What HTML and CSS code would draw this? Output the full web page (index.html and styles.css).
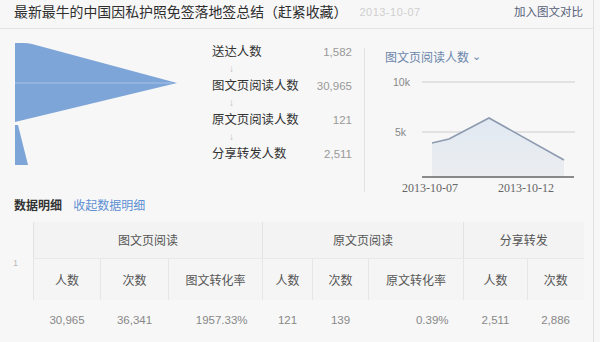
FILE: index.html
```html
<!DOCTYPE html>
<html lang="zh-CN">
<head>
    <meta charset="UTF-8">
    <title>图文分析</title>
    <link rel="stylesheet" href="styles.css">
</head>
<body>
<div class="page">
    <div class="page__head">
        <span class="page__title">最新最牛的中国因私护照免签落地签总结（赶紧收藏）</span>
        <span class="page__date">2013-10-07</span>
        <a class="page__compare">加入图文对比</a>
    </div>

    <div class="overview">
        <svg class="funnel" width="200" height="168" viewBox="0 0 200 168">
            <path d="M15 14 L24 14 Q28 14 32 15 L177 54 L15 93 Z" fill="#7ea5d7"/>
            <line x1="15" y1="54" x2="172" y2="54" stroke="#a8c3e6" stroke-width="1"/>
            <path d="M15 96 L18 96 L28 136 L15 136 Z" fill="#7ea5d7"/>
        </svg>

        <ul class="stats">
            <li class="stats__row"><span>送达人数</span><span class="stats__num">1,582</span></li>
            <li class="stats__arrow">↓</li>
            <li class="stats__row"><span>图文页阅读人数</span><span class="stats__num">30,965</span></li>
            <li class="stats__arrow">↓</li>
            <li class="stats__row"><span>原文页阅读人数</span><span class="stats__num">121</span></li>
            <li class="stats__arrow">↓</li>
            <li class="stats__row"><span>分享转发人数</span><span class="stats__num">2,511</span></li>
        </ul>

        <div class="trend">
            <div class="trend__title">图文页阅读人数 <span class="trend__caret">⌄</span></div>
            <svg class="trend__chart" width="200" height="125" viewBox="0 0 200 125">
                <defs>
                    <linearGradient id="area" x1="0" y1="0" x2="0" y2="1">
                        <stop offset="0" stop-color="#e1e9f3"/>
                        <stop offset="1" stop-color="#ebedef"/>
                    </linearGradient>
                </defs>
                <line x1="37" y1="10" x2="190" y2="10" stroke="#e2e2e2" stroke-width="2"/>
                <line x1="37" y1="60" x2="190" y2="60" stroke="#e2e2e2" stroke-width="2"/>
                <polygon points="47,71 64,67 104,46 179,88 179,105 47,105" fill="url(#area)"/>
                <polyline points="47,71 64,67 104,46 179,88" fill="none" stroke="#8d9bb0" stroke-width="1.6"/>
                <line x1="37" y1="105" x2="189" y2="105" stroke="#666" stroke-width="1.5"/>
                <text class="trend__axis" x="8" y="14">10k</text>
                <text class="trend__axis" x="10" y="64">5k</text>
                <text class="trend__date" x="45" y="120" text-anchor="middle">2013-10-07</text>
                <text class="trend__date" x="141" y="120" text-anchor="middle">2013-10-12</text>
            </svg>
        </div>
    </div>

    <div class="detail__head">
        <span class="detail__title">数据明细</span>
        <a class="detail__toggle">收起数据明细</a>
    </div>

    <div class="detail">
        <div class="detail__gutter"><span class="detail__mark">1</span></div>
        <table class="grid">
            <colgroup>
                <col style="width:67px"><col style="width:68px"><col style="width:94px">
                <col style="width:50px"><col style="width:56px"><col style="width:95px">
                <col style="width:64px"><col style="width:56px">
            </colgroup>
            <tr class="grid__group">
                <th colspan="3">图文页阅读</th>
                <th colspan="3">原文页阅读</th>
                <th colspan="2">分享转发</th>
            </tr>
            <tr class="grid__cols">
                <th>人数</th><th>次数</th><th>图文转化率</th>
                <th>人数</th><th>次数</th><th>原文转化率</th>
                <th>人数</th><th>次数</th>
            </tr>
            <tr class="grid__data">
                <td>30,965</td><td>36,341</td><td class="grid__rate">1957.33%</td>
                <td>121</td><td>139</td><td class="grid__rate">0.39%</td>
                <td>2,511</td><td>2,886</td>
            </tr>
        </table>
    </div>
</div>
</body>
</html>
```

FILE: styles.css
```css
*{
    box-sizing: border-box;
    margin:0;
    padding:0;
}
body{
    background:#f7f7f7;
    font-family:"Liberation Sans","Noto Sans CJK SC",sans-serif;
    color:#333;
}
.page{
    width:594px;
    height:342px;
    border-right:1px solid #e1e1e1;
    overflow:hidden;
}
.page__head{
    height:29px;
    display:flex;
    align-items:flex-start;
    padding:3px 10px 0 14px;
    border-bottom:1px solid #e3e3e3;
    line-height:18px;
}
.page__title{
    font-size:13.9px;
    color:#2e2e2e;
}
.page__date{
    margin-left:12px;
    font-size:11px;
    color:#cfcfcf;
    letter-spacing:0.5px;
}
.page__compare{
    margin-left:auto;
    font-size:11.5px;
    color:#56607a;
}

.overview{
    height:168px;
    display:flex;
    align-items:flex-start;
}
.funnel{
    flex:none;
    display:block;
}
.stats{
    list-style:none;
    width:164px;
    padding:14px 12px 0 12px;
}
.stats__row{
    display:flex;
    justify-content:space-between;
    height:18px;
    line-height:18px;
    font-size:12.4px;
    color:#333;
}
.stats__num{
    font-size:11.5px;
    color:#999;
}
.stats__arrow{
    height:16px;
    line-height:16px;
    padding-left:17px;
    font-size:10px;
    color:#bdbdbd;
}
.trend{
    margin-top:19px;
    height:144px;
    border-left:1px solid #e2e2e2;
    padding:2px 0 0 20px;
}
.trend__title{
    height:22px;
    line-height:16px;
    font-size:12px;
    color:#6b86ab;
}
.trend__caret{
    font-size:11px;
    position:relative;
    top:-2px;
}
.trend__chart{
    display:block;
    overflow:visible;
}
.trend__axis{
    font-family:"Liberation Sans",sans-serif;
    font-size:10.5px;
    fill:#888;
}
.trend__date{
    font-family:"Liberation Serif",serif;
    font-size:12px;
    fill:#666;
}

.detail__head{
    height:18px;
    line-height:18px;
    padding-left:14px;
    font-size:12px;
}
.detail__title{
    font-weight:bold;
    color:#333;
}
.detail__toggle{
    margin-left:8px;
    color:#5d8fd3;
}
.detail{
    display:flex;
    margin-top:7px;
}
.detail__gutter{
    width:33px;
    flex:none;
    padding:30px 0 0 13px;
}
.detail__mark{
    font-size:9px;
    color:#bbb;
}
.grid{
    width:550px;
    table-layout:fixed;
    border-collapse:collapse;
    font-size:12px;
}
.grid th{
    font-weight:normal;
    color:#555;
    background:#f3f3f3;
}
.grid__group th{
    height:36px;
    border-left:1px solid #e2e2e2;
    border-bottom:1px solid #e9e9e9;
}
.grid__cols th{
    height:42px;
    border-left:1px solid #e6e6e6;
    background:#f5f5f5;
}
.grid td{
    height:40px;
    text-align:center;
    color:#888;
    font-size:11.5px;
}
.grid td.grid__rate{
    text-align:right;
    padding-right:15px;
}
```
